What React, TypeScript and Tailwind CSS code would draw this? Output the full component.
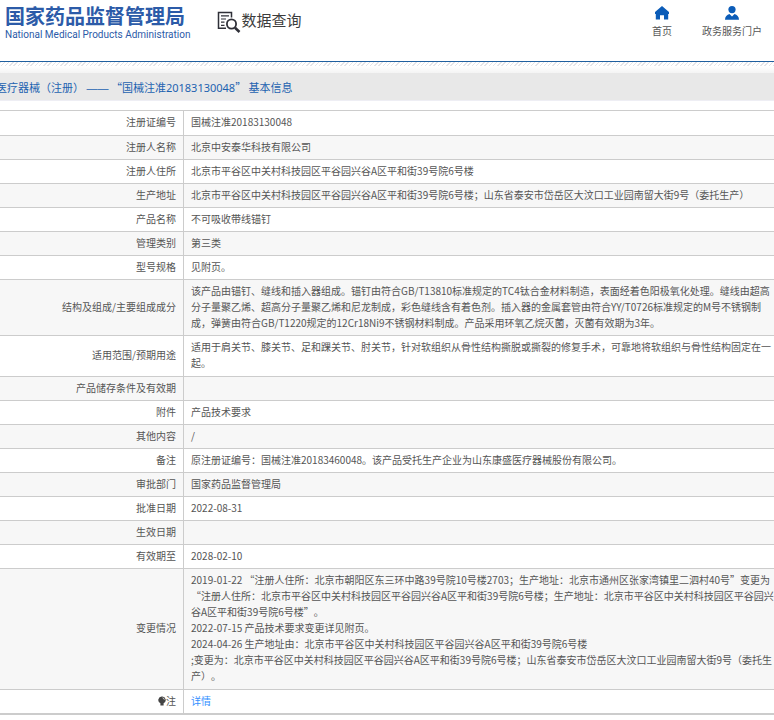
import React from "react";

type Row = { label: string; lines: string[]; height?: string };

const rows: Row[] = [
  { label: "注册证编号", lines: ["国械注准20183130048"], height: "h-[25px]" },
  { label: "注册人名称", lines: ["北京中安泰华科技有限公司"] },
  { label: "注册人住所", lines: ["北京市平谷区中关村科技园区平谷园兴谷A区平和街39号院6号楼"] },
  {
    label: "生产地址",
    lines: ["北京市平谷区中关村科技园区平谷园兴谷A区平和街39号院6号楼；山东省泰安市岱岳区大汶口工业园南留大街9号（委托生产）"],
  },
  { label: "产品名称", lines: ["不可吸收带线锚钉"] },
  { label: "管理类别", lines: ["第三类"] },
  { label: "型号规格", lines: ["见附页。"] },
  {
    label: "结构及组成/主要组成成分",
    lines: [
      "该产品由锚钉、缝线和插入器组成。锚钉由符合GB/T13810标准规定的TC4钛合金材料制造，表面经着色阳极氧化处理。缝线由超高",
      "分子量聚乙烯、超高分子量聚乙烯和尼龙制成，彩色缝线含有着色剂。插入器的金属套管由符合YY/T0726标准规定的M号不锈钢制",
      "成，弹簧由符合GB/T1220规定的12Cr18Ni9不锈钢材料制成。产品采用环氧乙烷灭菌，灭菌有效期为3年。",
    ],
    height: "h-[56px]",
  },
  {
    label: "适用范围/预期用途",
    lines: [
      "适用于肩关节、膝关节、足和踝关节、肘关节，针对软组织从骨性结构撕脱或撕裂的修复手术，可靠地将软组织与骨性结构固定在一",
      "起。",
    ],
    height: "h-[41px]",
  },
  { label: "产品储存条件及有效期", lines: [] },
  { label: "附件", lines: ["产品技术要求"] },
  { label: "其他内容", lines: ["/"] },
  { label: "备注", lines: ["原注册证编号：国械注准20183460048。该产品受托生产企业为山东康盛医疗器械股份有限公司。"] },
  { label: "审批部门", lines: ["国家药品监督管理局"] },
  { label: "批准日期", lines: ["2022-08-31"] },
  { label: "生效日期", lines: [] },
  { label: "有效期至", lines: ["2028-02-10"] },
  {
    label: "变更情况",
    lines: [
      "2019-01-22 “注册人住所：北京市朝阳区东三环中路39号院10号楼2703；生产地址：北京市通州区张家湾镇里二泗村40号”变更为",
      "“注册人住所：北京市平谷区中关村科技园区平谷园兴谷A区平和街39号院6号楼；生产地址：北京市平谷区中关村科技园区平谷园兴",
      "谷A区平和街39号院6号楼”。",
      "2022-07-15 产品技术要求变更详见附页。",
      "2024-04-26 生产地址由：北京市平谷区中关村科技园区平谷园兴谷A区平和街39号院6号楼",
      ";变更为：北京市平谷区中关村科技园区平谷园兴谷A区平和街39号院6号楼；山东省泰安市岱岳区大汶口工业园南留大街9号（委托生",
      "产）。",
    ],
    height: "h-[121px]",
  },
];

const labelCell = "w-[184px] border-r border-[#cccccc] pr-[7px] pb-0.5 text-right font-normal align-middle";
const valueCell = "pb-0.5 pl-[7px] text-left align-middle whitespace-nowrap";

function SearchDocIcon() {
  return (
    <svg viewBox="0 0 24 24" className="h-6 w-6" fill="none" stroke="#2f3038" aria-hidden="true">
      <path d="M9 18.300H1.500V2.500H14.500V7.500" strokeWidth="1.500" />
      <path d="M4 5.800h8M4 9h5M4 12.200h3.500M4 15.300h3.500" strokeWidth="1.200" />
      <circle cx="14.500" cy="14" r="4.600" strokeWidth="1.800" />
      <path d="M18 17.700L22.500 22" strokeWidth="2.600" />
    </svg>
  );
}

function HomeIcon() {
  return (
    <svg viewBox="0 0 14 14" className="h-[14px] w-[14px]" fill="#0b5cb8" aria-hidden="true">
      <path d="M7 0L0 6V8H.800V13.500H5V9.200H9V13.500H13.200V8H14V6Z" />
    </svg>
  );
}

function UserIcon() {
  return (
    <svg viewBox="0 0 14 14" className="h-[14px] w-[14px]" fill="#0b5cb8" aria-hidden="true">
      <circle cx="7" cy="3.600" r="3.600" />
      <path d="M0 13.800C0 10.500 2 8.600 4.500 8L7 10.400L9.500 8C12 8.600 14 10.500 14 13.800Z" />
    </svg>
  );
}

function BulbIcon() {
  return (
    <svg viewBox="0 0 8 10" className="h-[10px] w-2" fill="#444444" aria-hidden="true">
      <path d="M4 0.500A3.500 3.500 0 0 0 2.400 7.200V9.500H5.600V7.200A3.500 3.500 0 0 0 4 .5Z" />
      <path d="M4.600 1.800C5.600 2 6.200 2.700 6.300 3.600" fill="none" stroke="#ffffff" strokeWidth=".8" />
    </svg>
  );
}

export default function App() {
  return (
    <div className="min-h-screen overflow-hidden bg-white font-['Noto_Sans_CJK_SC',sans-serif] text-[10px] leading-4 text-[#555555] [text-spacing-trim:space-all]">
      <header className="flex h-[61px] items-start justify-between pr-3">
        <div className="flex items-start">
          <div className="pt-1 pl-[5px] text-[#2c5ba8]">
            <h1 className="text-[20px] leading-[23px] font-bold whitespace-nowrap">国家药品监督管理局</h1>
            <p className="font-[Roboto,sans-serif] text-[10px] leading-4 whitespace-nowrap">
              National Medical Products Administration
            </p>
          </div>
          <div className="flex items-start pt-[10px] pl-[27px]">
            <SearchDocIcon />
            <span className="text-[15px] leading-5 whitespace-nowrap text-[#3c3c3c]">数据查询</span>
          </div>
        </div>
        <nav className="flex gap-[30px] pt-1.5">
          <a href="#home" className="flex flex-col items-center gap-[3px]">
            <HomeIcon />
            <span>首页</span>
          </a>
          <a href="#portal" className="flex flex-col items-center gap-[3px]">
            <UserIcon />
            <span>政务服务门户</span>
          </a>
        </nav>
      </header>
      <div className="h-px bg-[#1f5f9f]" />
      <div className="h-1 bg-[repeating-linear-gradient(135deg,#e4e4e8_0px,#e4e4e8_1px,#ffffff_1px,#ffffff_3px)]" />
      <div className="h-[7px] bg-linear-to-b from-white to-[#f4f4f4]" />
      <div className="h-7 overflow-hidden border-b border-[#eeeef4] bg-[#e8e8e8]">
        <h2 className="-ml-1 text-[11px] leading-7 whitespace-nowrap text-[#1d62b0]">
          医疗器械（注册） <span className="font-['Liberation_Sans',sans-serif]">——</span> “国械注准
          <span className="font-['Noto_Sans',sans-serif]">20183130048</span>” 基本信息
        </h2>
      </div>
      <table className="mt-[9px] w-full table-fixed border-separate border-spacing-0 border-t border-[#cccccc]">
        <tbody>
          {rows.map((row, i) => (
            <tr key={row.label} className={`${row.height ?? "h-6"} ${i % 2 ? "bg-[#f7f7f7]" : "bg-white"}`}>
              <th scope="row" className={`${labelCell} border-b`}>
                {row.label}
              </th>
              <td className={`${valueCell} border-b border-[#cccccc]`}>
                {row.lines.map((line) => (
                  <div key={line}>{line}</div>
                ))}
              </td>
            </tr>
          ))}
          <tr className="h-[25px] bg-white">
            <th scope="row" className={`${labelCell} border-b-2`}>
              <span className="flex items-center justify-end">
                <BulbIcon />注
              </span>
            </th>
            <td className={`${valueCell} border-b-2 border-[#cccccc]`}>
              <a href="#detail" className="text-[#3390ff]">
                详情
              </a>
            </td>
          </tr>
        </tbody>
      </table>
    </div>
  );
}
